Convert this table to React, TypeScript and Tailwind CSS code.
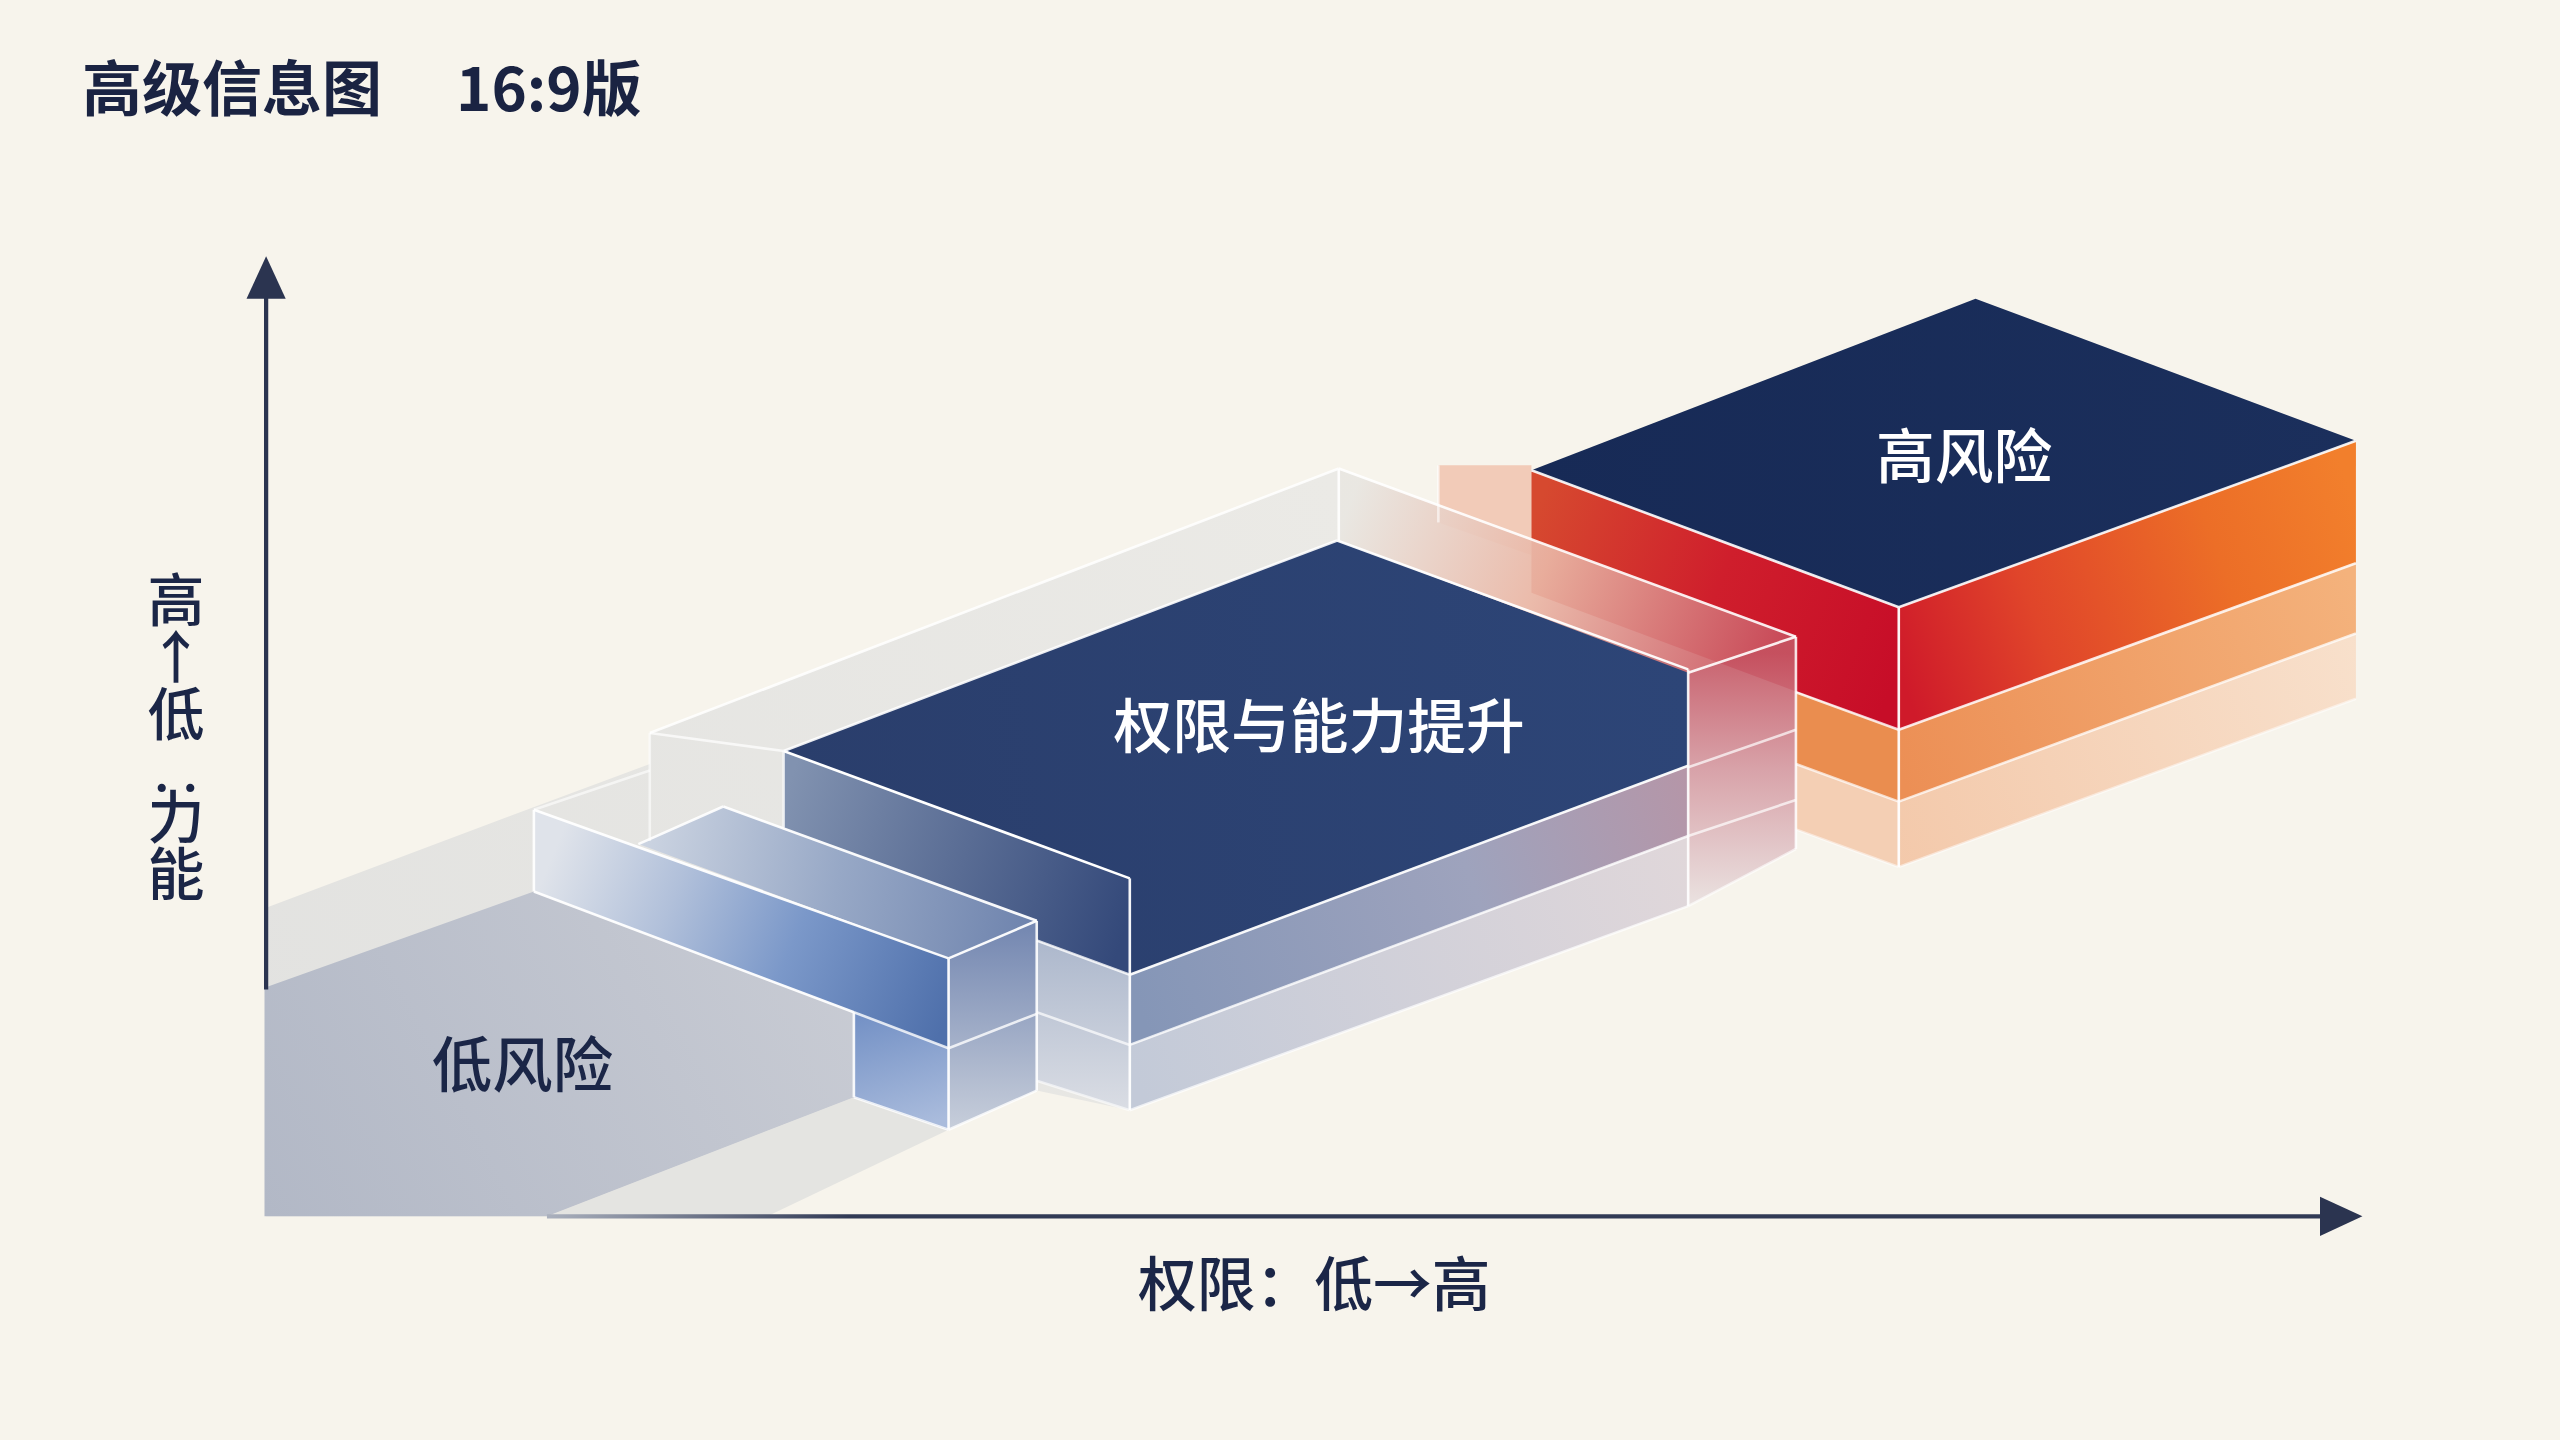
type Line = [number, number, number, number, number];

const pts = (p: number[][]) => p.map((q) => q.join(',')).join(' ');

// white glass edges, drawn over the faces (x1, y1, x2, y2, opacity)
const edges: Line[] = [
  [327, 546, 523, 620, 0.95],
  [523, 620, 523, 672, 0.9],
  [327, 496, 327, 546, 0.9],
  [327, 496, 581, 587, 0.95],
  [391, 517, 443, 494, 0.9],
  [443, 494, 635, 564, 0.95],
  [581, 587, 635, 564, 0.95],
  [581, 587, 581, 692, 0.95],
  [635, 564, 635, 668, 0.9],
  [523, 620, 581, 642, 0.8],
  [581, 642, 635, 621, 0.8],
  [523, 672, 581, 692, 0.8],
  [581, 692, 635, 668, 0.8],
  [635, 576, 692, 597, 0.8],
  [635, 620, 692, 640, 0.7],
  [635, 662, 692, 680, 0.6],
  [480, 460, 692, 538, 1],
  [480, 460, 819, 331, 0.9],
  [819, 331, 1034, 410, 0.95],
  [692, 538, 692, 680, 0.95],
  [1034, 410, 1034, 555, 0.9],
  [692, 597, 1034, 469, 0.95],
  [692, 640, 1034, 512, 0.8],
  [692, 680, 1034, 555, 0.7],
  [480, 460, 480, 507, 0.7],
  [398, 449, 820, 287, 0.85],
  [398, 449, 480, 460, 0.7],
  [398, 449, 398, 515, 0.6],
  [327, 496, 398, 472, 0.6],
  [820, 287, 820, 331, 0.9],
  [820, 287, 1100, 390, 0.9],
  [1034, 412, 1100, 390, 0.9],
  [1100, 390, 1100, 520, 0.85],
  [1034, 470, 1100, 447, 0.7],
  [1034, 512, 1100, 490, 0.7],
  [1034, 555, 1100, 520, 0.6],
  [881, 285, 881, 320, 0.6],
  [938, 288, 1163, 372, 0.9],
  [1163, 372, 1443, 270, 0.9],
  [1163, 372, 1163, 531, 0.95],
  [1163, 447, 1443, 345, 0.85],
  [1163, 491, 1443, 388, 0.75],
  [1163, 531, 1443, 428, 0.5],
  [1100, 424, 1163, 447, 0.8],
  [1100, 468, 1163, 491, 0.7],
  [1100, 508, 1163, 531, 0.5],
];

function Chart() {
  return (
    <svg
      className="absolute inset-0 h-full w-full"
      viewBox="0 0 1568 882"
      preserveAspectRatio="none"
    >
      <defs>
        <linearGradient id="gRibbon" gradientUnits="userSpaceOnUse" x1="163" y1="700" x2="820" y2="300">
          <stop offset="0" stopColor="#e2e2e0" />
          <stop offset="1" stopColor="#ebeae6" />
        </linearGradient>
        <linearGradient id="gGray" gradientUnits="userSpaceOnUse" x1="163" y1="745" x2="520" y2="560">
          <stop offset="0" stopColor="#b2b8c6" />
          <stop offset="1" stopColor="#c9ccd4" />
        </linearGradient>
        <linearGradient id="gF1" gradientUnits="userSpaceOnUse" x1="340" y1="520" x2="581" y2="620">
          <stop offset="0" stopColor="#dfe3ea" />
          <stop offset="0.3" stopColor="#b1c0da" />
          <stop offset="0.6" stopColor="#7b98c9" />
          <stop offset="1" stopColor="#4f70ab" />
        </linearGradient>
        <linearGradient id="gT1" gradientUnits="userSpaceOnUse" x1="391" y1="517" x2="635" y2="564">
          <stop offset="0" stopColor="#cdd5e2" />
          <stop offset="0.5" stopColor="#97a8c6" />
          <stop offset="1" stopColor="#6e83ad" />
        </linearGradient>
        <linearGradient id="gR1" gradientUnits="userSpaceOnUse" x1="600" y1="570" x2="600" y2="690">
          <stop offset="0" stopColor="#7689b2" />
          <stop offset="1" stopColor="#c6cdda" />
        </linearGradient>
        <linearGradient id="gLow" gradientUnits="userSpaceOnUse" x1="540" y1="620" x2="560" y2="690">
          <stop offset="0" stopColor="#7592c6" />
          <stop offset="1" stopColor="#a9bbdc" />
        </linearGradient>
        <linearGradient id="gUnder" gradientUnits="userSpaceOnUse" x1="660" y1="580" x2="660" y2="680">
          <stop offset="0" stopColor="#aeb9cd" />
          <stop offset="1" stopColor="#dadde4" />
        </linearGradient>
        <linearGradient id="gNavy" gradientUnits="userSpaceOnUse" x1="480" y1="460" x2="1034" y2="410">
          <stop offset="0" stopColor="#2a3e6c" />
          <stop offset="1" stopColor="#2d4577" />
        </linearGradient>
        <linearGradient id="gL2" gradientUnits="userSpaceOnUse" x1="480" y1="490" x2="692" y2="560">
          <stop offset="0" stopColor="#8192b0" />
          <stop offset="1" stopColor="#34497a" />
        </linearGradient>
        <linearGradient id="gLayer1" gradientUnits="userSpaceOnUse" x1="692" y1="600" x2="1034" y2="480">
          <stop offset="0" stopColor="#8596b7" />
          <stop offset="0.6" stopColor="#9ea3bd" />
          <stop offset="1" stopColor="#b596a8" />
        </linearGradient>
        <linearGradient id="gLayer2" gradientUnits="userSpaceOnUse" x1="692" y1="650" x2="1034" y2="520">
          <stop offset="0" stopColor="#c3cad8" />
          <stop offset="1" stopColor="#e0d7da" />
        </linearGradient>
        <linearGradient id="gBand" gradientUnits="userSpaceOnUse" x1="830" y1="300" x2="1090" y2="400">
          <stop offset="0" stopColor="#e8e6e1" />
          <stop offset="0.45" stopColor="#eab6a5" />
          <stop offset="1" stopColor="#c84e5c" />
        </linearGradient>
        <linearGradient id="gGlassR" gradientUnits="userSpaceOnUse" x1="1067" y1="400" x2="1067" y2="555">
          <stop offset="0" stopColor="#c55563" />
          <stop offset="0.45" stopColor="#d59aa2" />
          <stop offset="1" stopColor="#e9e1e0" />
        </linearGradient>
        <linearGradient id="gHighTop" gradientUnits="userSpaceOnUse" x1="938" y1="288" x2="1443" y2="270">
          <stop offset="0" stopColor="#172a56" />
          <stop offset="1" stopColor="#1b2f5c" />
        </linearGradient>
        <linearGradient id="gRed" gradientUnits="userSpaceOnUse" x1="938" y1="320" x2="1163" y2="410">
          <stop offset="0" stopColor="#d6492f" />
          <stop offset="0.5" stopColor="#cf1e2c" />
          <stop offset="1" stopColor="#c70d28" />
        </linearGradient>
        <linearGradient id="gOrange" gradientUnits="userSpaceOnUse" x1="1163" y1="410" x2="1443" y2="310">
          <stop offset="0" stopColor="#cf1a2a" />
          <stop offset="0.3" stopColor="#e0452a" />
          <stop offset="0.7" stopColor="#ec6e27" />
          <stop offset="1" stopColor="#f27f2c" />
        </linearGradient>
        <linearGradient id="gOr2" gradientUnits="userSpaceOnUse" x1="1163" y1="470" x2="1443" y2="365">
          <stop offset="0" stopColor="#ec8f55" />
          <stop offset="1" stopColor="#f4b27c" />
        </linearGradient>
        <linearGradient id="gOr3" gradientUnits="userSpaceOnUse" x1="1163" y1="510" x2="1443" y2="408">
          <stop offset="0" stopColor="#f3c2a0" />
          <stop offset="1" stopColor="#f8dcc5" />
        </linearGradient>
        <linearGradient id="gAxis" gradientUnits="userSpaceOnUse" x1="335" y1="745" x2="520" y2="745">
          <stop offset="0" stopColor="#aab0bd" />
          <stop offset="1" stopColor="#313a55" />
        </linearGradient>
      </defs>

      {/* peach plate behind */}
      <polygon points={pts([[881, 285], [938, 285], [938, 340], [881, 320]])} fill="#f2cbb8" />

      {/* high risk block */}
      <polygon points={pts([[1100, 468], [1163, 491], [1163, 531], [1100, 508]])} fill="#f3c6a6" opacity="0.8" />
      <polygon points={pts([[1163, 491], [1443, 388], [1443, 428], [1163, 531]])} fill="url(#gOr3)" opacity="0.85" />
      <polygon points={pts([[1100, 424], [1163, 447], [1163, 491], [1100, 468]])} fill="#e8823e" opacity="0.9" />
      <polygon points={pts([[1163, 447], [1443, 345], [1443, 388], [1163, 491]])} fill="url(#gOr2)" />
      <polygon points={pts([[938, 288], [1163, 372], [1163, 447], [938, 363]])} fill="url(#gRed)" />
      <polygon points={pts([[1163, 372], [1443, 270], [1443, 345], [1163, 447]])} fill="url(#gOrange)" />
      <polygon points={pts([[938, 288], [1210, 183], [1443, 270], [1163, 372]])} fill="url(#gHighTop)" />

      {/* pale glass ribbon */}
      <polygon
        points={pts([
          [163, 556], [328, 494], [398, 468], [398, 449], [820, 287], [819, 331],
          [1034, 410], [1034, 555], [692, 680], [635, 668], [581, 692], [523, 672],
          [335, 745], [163, 745],
        ])}
        fill="url(#gRibbon)"
      />
      <polygon points={pts([[335, 745], [523, 672], [581, 692], [470, 745]])} fill="#e4e4e1" />

      {/* low risk block */}
      <polygon points={pts([[162, 605], [327, 546], [523, 620], [523, 672], [335, 745], [162, 745]])} fill="url(#gGray)" />

      {/* middle block */}
      <polygon points={pts([[480, 460], [692, 538], [692, 597], [480, 519]])} fill="url(#gL2)" />
      <polygon points={pts([[635, 576], [692, 597], [692, 680], [635, 662]])} fill="url(#gUnder)" />
      <polygon points={pts([[692, 597], [1034, 469], [1034, 512], [692, 640]])} fill="url(#gLayer1)" />
      <polygon points={pts([[692, 640], [1034, 512], [1034, 555], [692, 680]])} fill="url(#gLayer2)" />
      <polygon
        points={pts([[480, 460], [819, 331], [1034, 410], [1034, 469], [692, 597], [692, 538]])}
        fill="url(#gNavy)"
      />

      {/* blue step */}
      <polygon points={pts([[327, 496], [581, 587], [581, 692], [523, 672], [523, 620], [327, 546]])} fill="url(#gF1)" />
      <polygon points={pts([[523, 620], [581, 642], [581, 692], [523, 672]])} fill="url(#gLow)" />
      <polygon points={pts([[391, 517], [443, 494], [635, 564], [581, 587]])} fill="url(#gT1)" />
      <polygon points={pts([[581, 587], [635, 564], [635, 668], [581, 692]])} fill="url(#gR1)" />

      {/* tall glass over the red block */}
      <polygon points={pts([[820, 287], [1100, 390], [1034, 412], [819, 331]])} fill="url(#gBand)" opacity="0.92" />
      <polygon points={pts([[1034, 412], [1100, 390], [1100, 520], [1034, 555]])} fill="url(#gGlassR)" opacity="0.92" />

      {edges.map(([x1, y1, x2, y2, o], i) => (
        <line key={i} x1={x1} y1={y1} x2={x2} y2={y2} stroke="#ffffff" strokeWidth="1.6" strokeOpacity={o} />
      ))}

      {/* axes */}
      <line x1="163" y1="176" x2="163" y2="606" stroke="#2b3450" strokeWidth="2.6" />
      <polygon points="163,157 151,183 175,183" fill="#2b3450" />
      <line x1="335" y1="745" x2="1426" y2="745" stroke="url(#gAxis)" strokeWidth="2.6" />
      <polygon points="1447,745 1421,733 1421,757" fill="#2b3450" />

      {/* labels */}
      <text x="320" y="666" textAnchor="middle" fontSize="37" fontWeight="500" fill="#1b2647">
        低风险
      </text>
      <text x="808" y="458" textAnchor="middle" fontSize="36" fontWeight="500" fill="#ffffff">
        权限与能力提升
      </text>
      <text x="1203" y="293" textAnchor="middle" fontSize="36" fontWeight="500" fill="#ffffff">
        高风险
      </text>
      <text x="805" y="800" textAnchor="middle" fontSize="36" fontWeight="500" fill="#1b2647">
        权限：低→高
      </text>
    </svg>
  );
}

export default function App() {
  return (
    <div className="relative h-screen w-full overflow-hidden bg-[#f7f4ec] font-['Noto_Sans_CJK_SC','Noto_Sans',sans-serif] text-[#1a2342]">
      <Chart />

      {/* Title */}
      <header className="relative flex items-center gap-[74px] pl-[82px] pt-[55px]">
        <h1 className="text-[60px] font-bold leading-none">高级信息图</h1>
        <span className="text-[60px] font-bold leading-none">16:9版</span>
      </header>

      {/* vertical y-axis label, upright characters; the colon sits as two side-by-side dots */}
      <div className="absolute left-[147px] top-[571px] text-[57px] font-medium leading-none text-[#1b2647] [text-orientation:upright] [writing-mode:vertical-rl]">
        高↑低
        <span className="inline-block h-[46px] w-[57px] text-center leading-[84px] [writing-mode:horizontal-tb]">‥</span>
        力能
      </div>
    </div>
  );
}
